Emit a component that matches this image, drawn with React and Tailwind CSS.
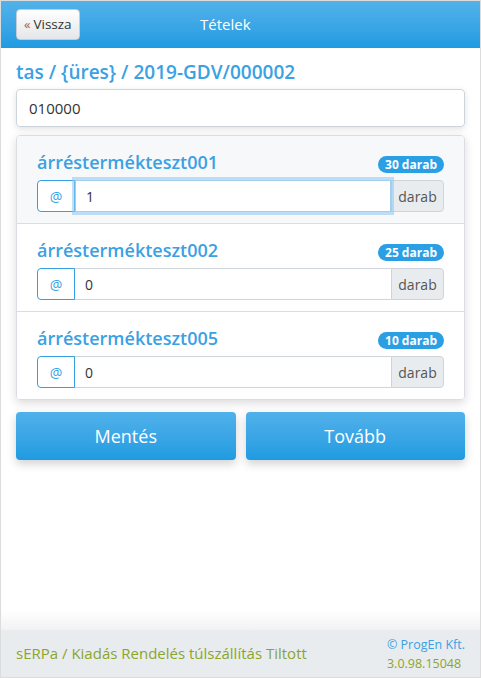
import React from 'react';

const rows = [
  { name: 'árréstermékteszt001', qty: 30, value: '1', active: true },
  { name: 'árréstermékteszt002', qty: 25, value: '0' },
  { name: 'árréstermékteszt005', qty: 10, value: '0' },
];

function ItemRow({ row, last }) {
  return (
    <div className={`px-5 pt-[12px] pb-[11px] ${row.active ? 'bg-[#f7f8fa]' : 'bg-white'} ${last ? '' : 'border-b border-[#dadee3]'}`}>
      <div className="flex h-[28px] items-end justify-between">
        <span className="text-[18px] font-semibold leading-[28px] text-[#3aa1e3]">{row.name}</span>
        <span className="mb-[3px] rounded-full bg-[#2a9fe4] px-[7px] text-[12px] font-bold leading-[17px] text-white">{row.qty} darab</span>
      </div>
      <div className="mt-[4px] flex h-[32px]">
        <span className="flex w-[38px] items-center justify-center rounded-l-[4px] border border-[#34a0e2] bg-white text-[14px] text-[#3aa1e3]">@</span>
        <input
          readOnly
          value={row.value}
          className={`min-w-0 flex-1 border-y bg-white px-[10px] text-[14px] text-[#333] outline-none ${row.active ? 'relative z-10 border-x border-[#9fd0f1] shadow-[0_0_0_3px_rgba(140,198,240,0.55)]' : 'border-[#ced4da]'}`}
        />
        <span className="flex w-[53px] items-center justify-center rounded-r-[4px] border border-[#ced4da] bg-[#e9ecef] text-[14px] text-[#555]">darab</span>
      </div>
    </div>
  );
}

export default function App() {
  return (
    <div className="flex h-[678px] w-[481px] flex-col overflow-hidden border border-[#dcdcdc] bg-white font-['Open_Sans',sans-serif]">
      <header className="relative flex h-[47px] shrink-0 items-center bg-gradient-to-b from-[#52b2ea] to-[#1f9be1] px-[15px]">
        <button className="flex h-[31px] items-center rounded-[4px] border border-[#c8ccd0] bg-gradient-to-b from-white to-[#e4e6e9] px-[7px] text-[13.5px] text-[#333]">
          <span className="mr-[3px] text-[13px] text-[#b06020]">«</span>Vissza
        </button>
        <span className="absolute left-[199px] text-[15px] text-white">Tételek</span>
      </header>

      <main className="flex-1 px-[15px] pt-[11px]">
        <div className="text-[19px] font-semibold leading-[26px] text-[#3aa1e3]">tas / {'{üres}'} / 2019-GDV/000002</div>
        <input
          readOnly
          value="010000"
          className="mt-[4px] h-[38px] w-full rounded-[4px] border border-[#ced4da] px-[12px] text-[15px] text-[#333] shadow-[0_2px_6px_rgba(0,0,0,0.12)] outline-none"
        />
        <div className="mt-[8px] overflow-hidden rounded-[4px] border border-[#dadee3] shadow-[0_3px_10px_rgba(0,0,0,0.15)]">
          {rows.map((row, i) => (
            <ItemRow key={row.name} row={row} last={i === rows.length - 1} />
          ))}
        </div>
        <div className="mt-[12px] flex gap-[10px]">
          <button className="h-[48px] flex-1 rounded-[4px] bg-gradient-to-b from-[#50b1ea] to-[#1e9be1] text-[18px] text-white shadow-[0_4px_10px_rgba(0,0,0,0.18)]">Mentés</button>
          <button className="h-[48px] flex-1 rounded-[4px] bg-gradient-to-b from-[#50b1ea] to-[#1e9be1] text-[18px] text-white shadow-[0_4px_10px_rgba(0,0,0,0.18)]">Tovább</button>
        </div>
      </main>

      <div className="h-[20px] shrink-0 bg-gradient-to-b from-white to-[#f1f2f4]" />
      <footer className="flex h-[47px] shrink-0 items-center justify-between bg-[#e9ecef] px-[15px]">
        <span className="text-[15px] text-[#8ba52b]">sERPa / Kiadás Rendelés túlszállítás Tiltott</span>
        <div className="flex flex-col items-start text-[12.5px] leading-[19px]">
          <span className="text-[#3aa1e3]">© ProgEn Kft.</span>
          <span className="text-[#8ba52b]">3.0.98.15048</span>
        </div>
      </footer>
    </div>
  );
}
